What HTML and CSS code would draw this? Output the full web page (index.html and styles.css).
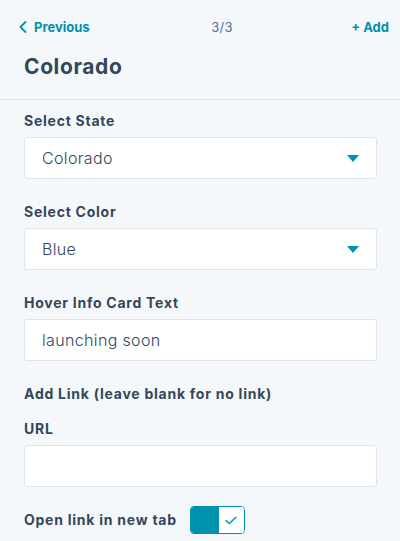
FILE: index.html
```html
<!DOCTYPE html>
<html>
<head>
<meta charset="utf-8">
<link rel="stylesheet" href="styles.css">
</head>
<body>
<div class="panel">
  <div class="nav">
    <a class="nav-prev"><svg class="chev" width="8" height="12" viewBox="0 0 8 12"><path d="M6.5 1 L1.5 6 L6.5 11" fill="none" stroke="#0091ae" stroke-width="1.8" stroke-linecap="round" stroke-linejoin="round"/></svg>Previous</a>
    <span class="nav-count">3/3</span>
    <a class="nav-add">+ Add</a>
  </div>
  <h1 class="title">Colorado</h1>
  <div class="fields">
    <div class="field">
      <div class="label">Select State</div>
      <div class="box select"><span>Colorado</span><span class="caret"></span></div>
    </div>
    <div class="field">
      <div class="label">Select Color</div>
      <div class="box select"><span>Blue</span><span class="caret"></span></div>
    </div>
    <div class="field">
      <div class="label">Hover Info Card Text</div>
      <div class="box"><span>launching soon</span></div>
    </div>
    <div class="section-label">Add Link (leave blank for no link)</div>
    <div class="field">
      <div class="label">URL</div>
      <div class="box"></div>
    </div>
    <div class="toggle-row">
      <span class="label">Open link in new tab</span>
      <span class="toggle"><span class="toggle-on"></span><span class="toggle-off"><svg width="12" height="9" viewBox="0 0 12 9"><path d="M1 4.5 L4.3 7.6 L11 1.2" fill="none" stroke="#0091ae" stroke-width="1.4" stroke-linecap="round" stroke-linejoin="round"/></svg></span></span>
    </div>
  </div>
</div>
</body>
</html>
```
FILE: styles.css
```css
html, body {
  margin: 0;
  padding: 0;
  background: #f5f8fa;
}
body {
  font-family: "Inter", "Lato", sans-serif;
  color: #33475b;
  width: 400px;
  height: 541px;
  overflow: hidden;
}
.nav {
  height: 54px;
  display: grid;
  grid-template-columns: 1fr auto 1fr;
  align-items: center;
  padding: 0 11px 0 19px;
}
.nav-prev, .nav-add {
  color: #0091ae;
  font-weight: 700;
  font-size: 13px;
  display: flex;
  align-items: center;
}
.nav-add {
  justify-self: end;
}
.chev {
  margin-right: 7px;
}
.nav-count {
  color: #516f90;
  font-size: 13px;
  letter-spacing: 0.3px;
  margin-left: 36px;
}
.title {
  margin: 0;
  font-size: 21px;
  line-height: 26px;
  font-weight: 700;
  letter-spacing: 0.6px;
  padding: 0 24px 19px;
  border-bottom: 1px solid #dfe3eb;
}
.fields {
  padding: 12px 23px 0 24px;
}
.field {
  margin-bottom: 24px;
}
.label, .section-label {
  font-size: 14px;
  line-height: 18px;
  font-weight: 700;
  letter-spacing: 0.75px;
}
.field .label {
  margin-bottom: 7px;
}
.section-label {
  margin-top: 2px;
  margin-bottom: 17px;
}
.box {
  box-sizing: border-box;
  height: 42px;
  background: #fff;
  border: 1px solid #dfe3eb;
  border-radius: 3px;
  display: flex;
  align-items: center;
  padding: 0 17px;
  font-size: 16px;
  font-weight: 300;
  letter-spacing: 0.35px;
  color: #33475b;
}
.select {
  justify-content: space-between;
}
.caret {
  width: 0;
  height: 0;
  border-left: 6px solid transparent;
  border-right: 6px solid transparent;
  border-top: 7px solid #0091ae;
}
.toggle-row {
  display: flex;
  align-items: center;
  gap: 13px;
  margin-top: -5px;
}
.toggle {
  box-sizing: border-box;
  width: 55px;
  height: 28px;
  border: 1px solid #0091ae;
  border-radius: 4px;
  display: flex;
  overflow: hidden;
}
.toggle-on {
  width: 28px;
  background: #0091ae;
}
.toggle-off {
  flex: 1;
  background: #fff;
  display: flex;
  align-items: center;
  justify-content: center;
}
```
